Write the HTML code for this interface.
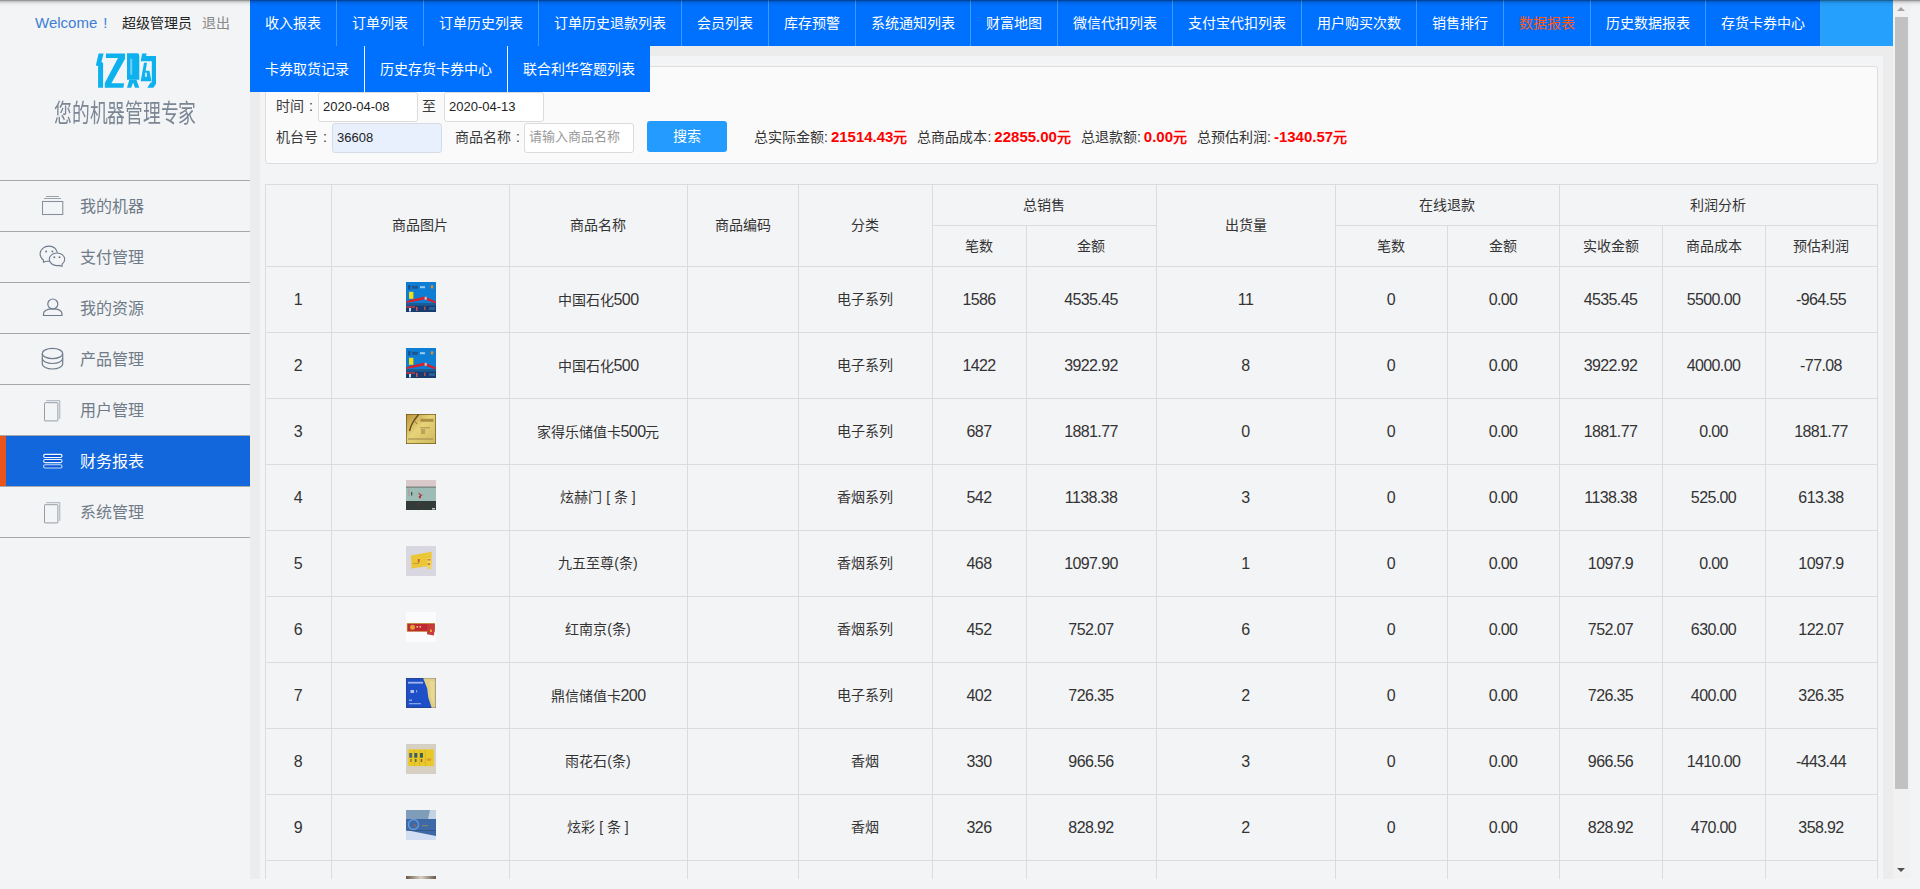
<!DOCTYPE html>
<html lang="zh-CN"><head><meta charset="utf-8"><title>report</title>
<style>
*{margin:0;padding:0;box-sizing:border-box}
html,body{width:1920px;height:889px;overflow:hidden}
body{font-family:"Liberation Sans",sans-serif;font-size:14px;color:#333;background:#f3f4f6;position:relative}
.abs{position:absolute}
.t{position:absolute;white-space:nowrap;line-height:1}
#side{left:0;top:0;width:250px;height:889px;background:#f3f4f6}
.mline{position:absolute;left:0;width:250px;height:1px;background:#a8a8a8}
.mtext{position:absolute;left:80px;font-size:16px;color:#6f7b88;line-height:1}
#frame{left:250px;top:0;width:1660px;height:879px;background:#ececec;overflow:hidden}
.nav{position:absolute;height:46px;background:#0070ff;color:#fff;font-size:14px;line-height:44px;padding-top:1px;padding-left:15px;white-space:nowrap}
.cell{position:absolute;text-align:center;white-space:nowrap;line-height:1;font-size:14px;color:#333}
.vl{position:absolute;width:1px;background:#dcdcdc}
.hl{position:absolute;height:1px;background:#dcdcdc}
.n{font-size:16px;letter-spacing:-0.6px}
.c{display:inline-block;width:14px;text-align:center}
</style></head><body>

<div id="side" class="abs">
<div class="t" style="left:35px;top:15px;font-size:15px;color:#3d7fd4">Welcome<span class="c" style="width:16px">!</span></div>
<div class="t" style="left:122px;top:16px;font-size:14px;color:#222">超级管理员</div>
<div class="t" style="left:202px;top:16px;font-size:14px;color:#888">退出</div>
<svg class="abs" style="left:92px;top:50px" width="68" height="42" viewBox="0 0 68 42">
<g fill="#0db1ee">
<path d="M6.6 3.5 L11.6 3.5 L9.5 11.8 L11.1 13.2 L11.1 37.8 L6.1 37.8 L6.1 16.1 L3.8 15.6 Z"/>
<path d="M13.9 3.5 L33.1 3.5 L33.1 8.7 L19.4 33.3 L32.1 33.3 L31.4 37.8 L12.8 37.8 L12.8 33.1 L26 8 L13.9 8 Z"/>
<path d="M35 3.3 L45.5 3.3 Q47.3 3.3 47.3 6 L47.3 29.8 L35 29.8 Z"/>
<path d="M37.3 29.8 L35 37.8 L39.2 37.8 L41.1 32.6 L43 37.8 L47.3 37.8 L44.4 29.8 Z"/>
<path d="M50.1 3.5 L54.8 3.5 L53.9 6.1 L64 6.1 L64 34 L61.4 37.8 L55.3 37.8 L58.6 32.6 L59.8 32.6 L59.8 11.3 L48.7 11.3 Z"/>
<path d="M52 12.8 L55 12.8 L53.6 20.8 L57.4 20.8 L59.5 31.2 L48.7 31.2 Z"/>
</g>
<rect x="38.2" y="8.7" width="2" height="16" fill="#74cdf2"/>
<rect x="52.9" y="22.7" width="2.1" height="4.2" fill="#bfe6f7"/>
</svg>
<div class="t" style="left:54px;top:101px;font-size:25px;color:#7a8693;transform:scaleX(0.71);transform-origin:0 0">您的机器管理专家</div>
<div class="mline" style="top:180px"></div>
<div class="mline" style="top:231px"></div>
<div class="mline" style="top:282px"></div>
<div class="mline" style="top:333px"></div>
<div class="mline" style="top:384px"></div>
<div class="mline" style="top:435px"></div>
<div class="mline" style="top:486px"></div>
<div class="mline" style="top:537px"></div>
<div class="abs" style="left:0;top:436px;width:250px;height:50px;background:#1267dc"></div>
<div class="abs" style="left:0;top:436px;width:6px;height:50px;background:#e8541a"></div>
<div class="mtext" style="top:199px;color:#6f7b88">我的机器</div>
<div class="mtext" style="top:250px;color:#6f7b88">支付管理</div>
<div class="mtext" style="top:301px;color:#6f7b88">我的资源</div>
<div class="mtext" style="top:352px;color:#6f7b88">产品管理</div>
<div class="mtext" style="top:403px;color:#6f7b88">用户管理</div>
<div class="mtext" style="top:454px;color:#fff">财务报表</div>
<div class="mtext" style="top:505px;color:#6f7b88">系统管理</div>
<svg class="abs" style="left:40px;top:194px" width="26" height="24"><g fill="none" stroke="#6e7c8c" stroke-width="1.05">
<rect x="2.5" y="7.5" width="20.3" height="13" stroke="#87909b"/><line x1="4" y1="4.5" x2="21" y2="4.5" stroke="#9aa3ad"/><line x1="6" y1="2.5" x2="19" y2="2.5" stroke="#9aa3ad"/></g></svg>
<svg class="abs" style="left:38px;top:244px" width="30" height="26"><g fill="none" stroke="#6e7c8c" stroke-width="1.1" stroke-linejoin="round">
<path d="M11.3 17.4 C8.5 17.1 7.2 17.3 5.4 18.3 L5.5 16.2 C3.3 14.5 2.1 12.3 2.1 9.8 C2.1 5.4 6.2 2.1 11 2.1 C15 2.1 18.3 4.6 19.4 8.6"/>
<path d="M21.9 21.4 C20.9 21.6 20 21.6 19 21.6 C14.7 21.6 11.3 18.8 11.3 15.3 C11.3 11.8 14.7 9 19 9 C23.3 9 26.7 11.8 26.7 15.3 C26.7 17.2 25.8 18.8 24.2 20 L24 22.5 Z"/>
</g><g fill="#6e7c8c"><circle cx="8.1" cy="7.5" r="1"/><circle cx="14.4" cy="7.5" r="1"/><circle cx="16.3" cy="13.2" r="1"/><circle cx="21.5" cy="13.2" r="1"/></g></svg>
<svg class="abs" style="left:40px;top:296px" width="26" height="24"><g fill="none" stroke="#6e7c8c" stroke-width="1.2">
<circle cx="12.8" cy="8" r="5"/><path d="M3.5 19.5 L3.5 18 C3.5 14.8 7 12.8 12.8 12.8 C18.5 12.8 22 14.8 22 18 L22 19.5 Z"/></g></svg>
<svg class="abs" style="left:40px;top:346px" width="26" height="26"><g fill="none" stroke="#6e7c8c" stroke-width="1.2">
<ellipse cx="12.5" cy="7.5" rx="10.2" ry="5.1"/><path d="M2.3 7.5 L2.3 17.8 C2.3 20.8 6.8 23 12.5 23 C18.2 23 22.7 20.8 22.7 17.8 L22.7 7.5"/><path d="M2.3 12.3 C2.3 15.3 6.8 17.5 12.5 17.5 C18.2 17.5 22.7 15.3 22.7 12.3"/></g></svg>
<svg class="abs" style="left:42px;top:398px" width="22" height="26"><g fill="none" stroke-width="0.9">
<path d="M4.3 2.7 L17.8 2.7 L17.8 20.8" stroke="#a2a9b2"/><rect x="2.5" y="4.7" width="13.4" height="18.2" rx="0.6" stroke="#8b939d"/></g></svg>
<svg class="abs" style="left:42px;top:500px" width="22" height="26"><g fill="none" stroke-width="0.9">
<path d="M4.3 2.7 L17.8 2.7 L17.8 20.8" stroke="#a2a9b2"/><rect x="2.5" y="4.7" width="13.4" height="18.2" rx="0.6" stroke="#8b939d"/></g></svg>
<svg class="abs" style="left:42px;top:452px" width="22" height="18"><g fill="#0a58da" stroke-width="1.1">
<rect x="1.6" y="2.4" width="18.4" height="3.1" rx="1.5" stroke="#fff"/><rect x="1.6" y="7.5" width="18.4" height="3.1" rx="1.5" stroke="#e8f0fc"/><rect x="1.6" y="12.8" width="18.4" height="3.2" rx="1.5" stroke="#c6d9f6"/></g></svg>
</div>
<div id="frame" class="abs">
<div class="abs" style="left:10px;top:56px;width:1623px;height:823px;background:#f3f4f6"></div>
<div class="abs" style="left:15px;top:66px;width:1613px;height:98px;background:#fafafa;border:1px solid #dedede;border-radius:3px"></div>
<div class="abs" style="left:0;top:0;width:1643px;height:46px;background:#25a0fd"></div>
<div class="nav" style="left:0px;top:0;width:87px;color:#fff">收入报表<i class="abs" style="right:0;top:0;width:1px;height:46px;background:#3d9bff"></i></div>
<div class="nav" style="left:87px;top:0;width:87px;color:#fff">订单列表<i class="abs" style="right:0;top:0;width:1px;height:46px;background:#3d9bff"></i></div>
<div class="nav" style="left:174px;top:0;width:115px;color:#fff">订单历史列表<i class="abs" style="right:0;top:0;width:1px;height:46px;background:#3d9bff"></i></div>
<div class="nav" style="left:289px;top:0;width:143px;color:#fff">订单历史退款列表<i class="abs" style="right:0;top:0;width:1px;height:46px;background:#3d9bff"></i></div>
<div class="nav" style="left:432px;top:0;width:87px;color:#fff">会员列表<i class="abs" style="right:0;top:0;width:1px;height:46px;background:#3d9bff"></i></div>
<div class="nav" style="left:519px;top:0;width:87px;color:#fff">库存预警<i class="abs" style="right:0;top:0;width:1px;height:46px;background:#3d9bff"></i></div>
<div class="nav" style="left:606px;top:0;width:115px;color:#fff">系统通知列表<i class="abs" style="right:0;top:0;width:1px;height:46px;background:#3d9bff"></i></div>
<div class="nav" style="left:721px;top:0;width:87px;color:#fff">财富地图<i class="abs" style="right:0;top:0;width:1px;height:46px;background:#3d9bff"></i></div>
<div class="nav" style="left:808px;top:0;width:115px;color:#fff">微信代扣列表<i class="abs" style="right:0;top:0;width:1px;height:46px;background:#3d9bff"></i></div>
<div class="nav" style="left:923px;top:0;width:129px;color:#fff">支付宝代扣列表<i class="abs" style="right:0;top:0;width:1px;height:46px;background:#3d9bff"></i></div>
<div class="nav" style="left:1052px;top:0;width:115px;color:#fff">用户购买次数<i class="abs" style="right:0;top:0;width:1px;height:46px;background:#3d9bff"></i></div>
<div class="nav" style="left:1167px;top:0;width:87px;color:#fff">销售排行<i class="abs" style="right:0;top:0;width:1px;height:46px;background:#3d9bff"></i></div>
<div class="nav" style="left:1254px;top:0;width:87px;color:#ff5a14">数据报表<i class="abs" style="right:0;top:0;width:1px;height:46px;background:#3d9bff"></i></div>
<div class="nav" style="left:1341px;top:0;width:115px;color:#fff">历史数据报表<i class="abs" style="right:0;top:0;width:1px;height:46px;background:#3d9bff"></i></div>
<div class="nav" style="left:1456px;top:0;width:115px;color:#fff">存货卡券中心<i class="abs" style="right:0;top:0;width:1px;height:46px;background:#3d9bff"></i></div>
<div class="nav" style="left:0px;top:46px;width:115px">卡券取货记录<i class="abs" style="right:0;top:0;width:1px;height:46px;background:#f0f6ff"></i></div>
<div class="nav" style="left:115px;top:46px;width:143px">历史存货卡券中心<i class="abs" style="right:0;top:0;width:1px;height:46px;background:#f0f6ff"></i></div>
<div class="nav" style="left:258px;top:46px;width:142px">联合利华答题列表</div>
<div class="t" style="left:26px;top:99px;font-size:14px;color:#3a3a3a">时间<span class="c">:</span></div>
<div class="abs" style="left:68px;top:92px;width:100px;height:30px;background:#fff;border:1px solid #dcdcdc;border-radius:3px"></div>
<div class="t" style="left:73px;top:100px;font-size:13px;color:#222">2020-04-08</div>
<div class="t" style="left:172px;top:99px;font-size:14px;color:#3a3a3a">至</div>
<div class="abs" style="left:194px;top:92px;width:100px;height:30px;background:#fff;border:1px solid #dcdcdc;border-radius:3px"></div>
<div class="t" style="left:199px;top:100px;font-size:13px;color:#222">2020-04-13</div>
<div class="t" style="left:26px;top:130px;font-size:14px;color:#3a3a3a">机台号<span class="c">:</span></div>
<div class="abs" style="left:82px;top:123px;width:110px;height:30px;background:#e8f0fe;border:1px solid #d5dce6;border-radius:3px"></div>
<div class="t" style="left:87px;top:131px;font-size:13px;color:#222">36608</div>
<div class="t" style="left:205px;top:130px;font-size:14px;color:#3a3a3a">商品名称<span class="c">:</span></div>
<div class="abs" style="left:274px;top:123px;width:110px;height:30px;background:#fff;border:1px solid #dcdcdc;border-radius:3px"></div>
<div class="t" style="left:279px;top:130px;font-size:13px;color:#999">请输入商品名称</div>
<div class="abs" style="left:397px;top:121px;width:80px;height:31px;background:#249cff;border-radius:3px;color:#fff;font-size:14px;line-height:31px;text-align:center">搜索</div>
<div class="t" style="left:504px;top:129px;font-size:14px;color:#333">总实际金额:<b style="color:#f00;font-size:15px;margin-left:3px">21514.43<span style="font-size:14px">元</span></b><span style="margin-left:10px">总商品成本:</span><b style="color:#f00;font-size:15px;margin-left:3px">22855.00<span style="font-size:14px">元</span></b><span style="margin-left:10px">总退款额:</span><b style="color:#f00;font-size:15px;margin-left:3px">0.00<span style="font-size:14px">元</span></b><span style="margin-left:10px">总预估利润:</span><b style="color:#f00;font-size:15px;margin-left:3px">-1340.57<span style="font-size:14px">元</span></b></div>
<div class="hl" style="left:15px;top:184px;width:1613px"></div>
<div class="vl" style="left:15px;top:184px;height:695px"></div>
<div class="vl" style="left:81px;top:184px;height:695px"></div>
<div class="vl" style="left:259px;top:184px;height:695px"></div>
<div class="vl" style="left:437px;top:184px;height:695px"></div>
<div class="vl" style="left:548px;top:184px;height:695px"></div>
<div class="vl" style="left:682px;top:184px;height:695px"></div>
<div class="vl" style="left:776px;top:225px;height:654px"></div>
<div class="vl" style="left:906px;top:184px;height:695px"></div>
<div class="vl" style="left:1085px;top:184px;height:695px"></div>
<div class="vl" style="left:1197px;top:225px;height:654px"></div>
<div class="vl" style="left:1309px;top:184px;height:695px"></div>
<div class="vl" style="left:1412px;top:225px;height:654px"></div>
<div class="vl" style="left:1515px;top:225px;height:654px"></div>
<div class="vl" style="left:1627px;top:184px;height:695px"></div>
<div class="hl" style="left:682px;top:225px;width:224px"></div>
<div class="hl" style="left:1085px;top:225px;width:542px"></div>
<div class="hl" style="left:15px;top:266px;width:1613px"></div>
<div class="hl" style="left:15px;top:332px;width:1613px"></div>
<div class="hl" style="left:15px;top:398px;width:1613px"></div>
<div class="hl" style="left:15px;top:464px;width:1613px"></div>
<div class="hl" style="left:15px;top:530px;width:1613px"></div>
<div class="hl" style="left:15px;top:596px;width:1613px"></div>
<div class="hl" style="left:15px;top:662px;width:1613px"></div>
<div class="hl" style="left:15px;top:728px;width:1613px"></div>
<div class="hl" style="left:15px;top:794px;width:1613px"></div>
<div class="hl" style="left:15px;top:860px;width:1613px"></div>
<div class="cell" style="left:81px;width:178px;top:218px;">商品图片</div>
<div class="cell" style="left:259px;width:178px;top:218px;">商品名称</div>
<div class="cell" style="left:437px;width:111px;top:218px;">商品编码</div>
<div class="cell" style="left:548px;width:134px;top:218px;">分类</div>
<div class="cell" style="left:906px;width:179px;top:218px;">出货量</div>
<div class="cell" style="left:682px;width:224px;top:198px;">总销售</div>
<div class="cell" style="left:1085px;width:224px;top:198px;">在线退款</div>
<div class="cell" style="left:1309px;width:318px;top:198px;">利润分析</div>
<div class="cell" style="left:682px;width:94px;top:239px;">笔数</div>
<div class="cell" style="left:776px;width:130px;top:239px;">金额</div>
<div class="cell" style="left:1085px;width:112px;top:239px;">笔数</div>
<div class="cell" style="left:1197px;width:112px;top:239px;">金额</div>
<div class="cell" style="left:1309px;width:103px;top:239px;">实收金额</div>
<div class="cell" style="left:1412px;width:103px;top:239px;">商品成本</div>
<div class="cell" style="left:1515px;width:112px;top:239px;">预估利润</div>
<svg width="0" height="0" style="position:absolute"><defs><filter id="tbl" x="-10%" y="-10%" width="120%" height="120%"><feGaussianBlur stdDeviation="0.4"/></filter><clipPath id="tcl"><rect width="30" height="30"/></clipPath></defs></svg>
<div class="cell" style="left:15px;width:66px;top:292px;"><span class="n">1</span></div>
<svg class="abs" style="left:156px;top:282px" width="30" height="30" viewBox="0 0 30 30"><g clip-path="url(#tcl)"><rect width="30" height="30" fill="#0c7ed4"/><g filter="url(#tbl)"><rect width="30" height="30" fill="#0c7ed4"/><rect x="2" y="3" width="2.5" height="4.5" fill="#23508c"/><rect x="6" y="3.8" width="6" height="3" fill="#1f5590"/><rect x="14" y="4.2" width="5" height="2" fill="#9ccaf0"/><ellipse cx="26" cy="4.8" rx="1.3" ry="1.9" fill="#e08a2c"/><rect x="3" y="9.8" width="4.4" height="7" fill="#f2e019"/><path d="M0.5 19 L18.5 14.6 L30 19.6 L30 21.6 L18.5 17.4 L0.5 21 Z" fill="#d8202c"/><rect x="18.6" y="14.8" width="2.2" height="3" fill="#b8c8d8"/><rect x="0" y="21" width="30" height="2.6" fill="#1c5c92"/><rect x="0" y="23.5" width="30" height="6.5" fill="#173e6e"/><rect x="0" y="24.2" width="9" height="1.6" fill="#c03848"/><rect x="3" y="26" width="2" height="3.5" fill="#c8dcec"/><rect x="10" y="25" width="1.5" height="4" fill="#d05060"/><rect x="18" y="24.5" width="1.5" height="3.5" fill="#c04858"/><rect x="23" y="25" width="6" height="3" fill="#2a5e98"/></g></g></svg>
<div class="cell" style="left:259px;width:178px;top:292px;">中国石化<span class="n">500</span></div>
<div class="cell" style="left:548px;width:134px;top:292px;">电子系列</div>
<div class="cell" style="left:682px;width:94px;top:292px;"><span class="n">1586</span></div>
<div class="cell" style="left:776px;width:130px;top:292px;"><span class="n">4535.45</span></div>
<div class="cell" style="left:906px;width:179px;top:292px;"><span class="n">11</span></div>
<div class="cell" style="left:1085px;width:112px;top:292px;"><span class="n">0</span></div>
<div class="cell" style="left:1197px;width:112px;top:292px;"><span class="n">0.00</span></div>
<div class="cell" style="left:1309px;width:103px;top:292px;"><span class="n">4535.45</span></div>
<div class="cell" style="left:1412px;width:103px;top:292px;"><span class="n">5500.00</span></div>
<div class="cell" style="left:1515px;width:112px;top:292px;"><span class="n">-964.55</span></div>
<div class="cell" style="left:15px;width:66px;top:358px;"><span class="n">2</span></div>
<svg class="abs" style="left:156px;top:348px" width="30" height="30" viewBox="0 0 30 30"><g clip-path="url(#tcl)"><rect width="30" height="30" fill="#0c7ed4"/><g filter="url(#tbl)"><rect width="30" height="30" fill="#0c7ed4"/><rect x="2" y="3" width="2.5" height="4.5" fill="#23508c"/><rect x="6" y="3.8" width="6" height="3" fill="#1f5590"/><rect x="14" y="4.2" width="5" height="2" fill="#9ccaf0"/><ellipse cx="26" cy="4.8" rx="1.3" ry="1.9" fill="#e08a2c"/><rect x="3" y="9.8" width="4.4" height="7" fill="#f2e019"/><path d="M0.5 19 L18.5 14.6 L30 19.6 L30 21.6 L18.5 17.4 L0.5 21 Z" fill="#d8202c"/><rect x="18.6" y="14.8" width="2.2" height="3" fill="#b8c8d8"/><rect x="0" y="21" width="30" height="2.6" fill="#1c5c92"/><rect x="0" y="23.5" width="30" height="6.5" fill="#173e6e"/><rect x="0" y="24.2" width="9" height="1.6" fill="#c03848"/><rect x="3" y="26" width="2" height="3.5" fill="#c8dcec"/><rect x="10" y="25" width="1.5" height="4" fill="#d05060"/><rect x="18" y="24.5" width="1.5" height="3.5" fill="#c04858"/><rect x="23" y="25" width="6" height="3" fill="#2a5e98"/></g></g></svg>
<div class="cell" style="left:259px;width:178px;top:358px;">中国石化<span class="n">500</span></div>
<div class="cell" style="left:548px;width:134px;top:358px;">电子系列</div>
<div class="cell" style="left:682px;width:94px;top:358px;"><span class="n">1422</span></div>
<div class="cell" style="left:776px;width:130px;top:358px;"><span class="n">3922.92</span></div>
<div class="cell" style="left:906px;width:179px;top:358px;"><span class="n">8</span></div>
<div class="cell" style="left:1085px;width:112px;top:358px;"><span class="n">0</span></div>
<div class="cell" style="left:1197px;width:112px;top:358px;"><span class="n">0.00</span></div>
<div class="cell" style="left:1309px;width:103px;top:358px;"><span class="n">3922.92</span></div>
<div class="cell" style="left:1412px;width:103px;top:358px;"><span class="n">4000.00</span></div>
<div class="cell" style="left:1515px;width:112px;top:358px;"><span class="n">-77.08</span></div>
<div class="cell" style="left:15px;width:66px;top:424px;"><span class="n">3</span></div>
<svg class="abs" style="left:156px;top:414px" width="30" height="30" viewBox="0 0 30 30"><g clip-path="url(#tcl)"><rect width="30" height="30" fill="#d8c068"/><g filter="url(#tbl)"><defs><linearGradient id="g3" x1="0" y1="0" x2="1" y2="1"><stop offset="0" stop-color="#b89038"/><stop offset=".45" stop-color="#e6d47a"/><stop offset="1" stop-color="#cdb85a"/></linearGradient></defs><rect width="30" height="30" fill="url(#g3)"/><rect x="0.3" y="0.3" width="29.4" height="29.4" fill="none" stroke="#6a5018" stroke-width="0.7"/><path d="M12.5 0.5 L8 6.5 L5 12 L3.5 17" stroke="#6a4a20" stroke-width="1.4" fill="none"/><path d="M8 6 L11 10" stroke="#8a6a30" stroke-width="0.8"/><rect x="14.5" y="4.8" width="13" height="3" fill="#a08038" opacity=".8"/><rect x="14" y="13" width="10" height="1.5" fill="#b09050" opacity=".7"/><rect x="15" y="15" width="4" height="5" fill="#b09050" opacity=".7"/><rect x="2" y="24" width="25" height="2" fill="#a89050" opacity=".6"/></g></g></svg>
<div class="cell" style="left:259px;width:178px;top:424px;">家得乐储值卡<span class="n">500</span>元</div>
<div class="cell" style="left:548px;width:134px;top:424px;">电子系列</div>
<div class="cell" style="left:682px;width:94px;top:424px;"><span class="n">687</span></div>
<div class="cell" style="left:776px;width:130px;top:424px;"><span class="n">1881.77</span></div>
<div class="cell" style="left:906px;width:179px;top:424px;"><span class="n">0</span></div>
<div class="cell" style="left:1085px;width:112px;top:424px;"><span class="n">0</span></div>
<div class="cell" style="left:1197px;width:112px;top:424px;"><span class="n">0.00</span></div>
<div class="cell" style="left:1309px;width:103px;top:424px;"><span class="n">1881.77</span></div>
<div class="cell" style="left:1412px;width:103px;top:424px;"><span class="n">0.00</span></div>
<div class="cell" style="left:1515px;width:112px;top:424px;"><span class="n">1881.77</span></div>
<div class="cell" style="left:15px;width:66px;top:490px;"><span class="n">4</span></div>
<svg class="abs" style="left:156px;top:480px" width="30" height="30" viewBox="0 0 30 30"><g clip-path="url(#tcl)"><rect width="30" height="30" fill="#9dbcb6"/><g filter="url(#tbl)"><rect width="30" height="30" fill="#3a4442"/><rect width="30" height="7" fill="#d9c9cb"/><rect y="6.6" width="30" height="1" fill="#6c7674"/><rect y="7.5" width="30" height="13.5" fill="#9dbcb6"/><rect x="2.5" y="9" width="0.8" height="7" fill="#c08888"/><rect x="5" y="12" width="1.3" height="3.5" fill="#4a5050"/><path d="M12 12.5 L14 13.5 L15.5 15 L17.5 14.5 L15 16 L15 18 L13.5 18.5 L12.5 16.5 L14 15.5 Z" fill="#b03040"/><rect y="21" width="30" height="9" fill="#323a38"/><rect x="11.5" y="23" width="2" height="3" fill="#603838" opacity=".7"/><rect x="26" y="28" width="3" height="1.5" fill="#c8c8c8"/></g></g></svg>
<div class="cell" style="left:259px;width:178px;top:490px;">炫赫门 [ 条 ]</div>
<div class="cell" style="left:548px;width:134px;top:490px;">香烟系列</div>
<div class="cell" style="left:682px;width:94px;top:490px;"><span class="n">542</span></div>
<div class="cell" style="left:776px;width:130px;top:490px;"><span class="n">1138.38</span></div>
<div class="cell" style="left:906px;width:179px;top:490px;"><span class="n">3</span></div>
<div class="cell" style="left:1085px;width:112px;top:490px;"><span class="n">0</span></div>
<div class="cell" style="left:1197px;width:112px;top:490px;"><span class="n">0.00</span></div>
<div class="cell" style="left:1309px;width:103px;top:490px;"><span class="n">1138.38</span></div>
<div class="cell" style="left:1412px;width:103px;top:490px;"><span class="n">525.00</span></div>
<div class="cell" style="left:1515px;width:112px;top:490px;"><span class="n">613.38</span></div>
<div class="cell" style="left:15px;width:66px;top:556px;"><span class="n">5</span></div>
<svg class="abs" style="left:156px;top:546px" width="30" height="30" viewBox="0 0 30 30"><g clip-path="url(#tcl)"><rect width="30" height="30" fill="#d8d6df"/><g filter="url(#tbl)"><rect width="30" height="30" fill="#d8d6df"/><path d="M4.8 9.6 L25.6 5.8 L25.6 19.4 L5.6 22.6 Z" fill="#ebc734"/><rect x="21" y="12" width="4.3" height="11" fill="#f0d45a"/><rect x="11.8" y="13" width="1.8" height="3.4" fill="#c05a40"/><rect x="7" y="17" width="6" height="1" fill="#c8903a" opacity=".8"/><rect x="21.5" y="13" width="3" height="1.5" fill="#d08050"/><rect x="21.8" y="17" width="2" height="2" fill="#c87040"/></g></g></svg>
<div class="cell" style="left:259px;width:178px;top:556px;">九五至尊(条)</div>
<div class="cell" style="left:548px;width:134px;top:556px;">香烟系列</div>
<div class="cell" style="left:682px;width:94px;top:556px;"><span class="n">468</span></div>
<div class="cell" style="left:776px;width:130px;top:556px;"><span class="n">1097.90</span></div>
<div class="cell" style="left:906px;width:179px;top:556px;"><span class="n">1</span></div>
<div class="cell" style="left:1085px;width:112px;top:556px;"><span class="n">0</span></div>
<div class="cell" style="left:1197px;width:112px;top:556px;"><span class="n">0.00</span></div>
<div class="cell" style="left:1309px;width:103px;top:556px;"><span class="n">1097.9</span></div>
<div class="cell" style="left:1412px;width:103px;top:556px;"><span class="n">0.00</span></div>
<div class="cell" style="left:1515px;width:112px;top:556px;"><span class="n">1097.9</span></div>
<div class="cell" style="left:15px;width:66px;top:622px;"><span class="n">6</span></div>
<svg class="abs" style="left:156px;top:612px" width="30" height="30" viewBox="0 0 30 30"><g clip-path="url(#tcl)"><rect width="30" height="30" fill="#fbfbfb"/><g filter="url(#tbl)"><rect width="30" height="30" fill="#fbfbfb"/><rect x="0.8" y="11" width="28.2" height="8.8" fill="#c8a048"/><rect x="1.5" y="11.8" width="27" height="7.4" fill="#bf2a32"/><circle cx="6.5" cy="15.3" r="2.5" fill="#e0a030"/><rect x="10.5" y="14" width="1.5" height="1.6" fill="#f0c8a0"/><rect x="13.5" y="14" width="1.5" height="1.6" fill="#f0c8a0"/><path d="M21.5 12 L28.8 12.3 L28 23.5 L21 22.3 Z" fill="#c83a3a"/><rect x="24" y="17.5" width="2" height="2.5" fill="#e8a030"/></g></g></svg>
<div class="cell" style="left:259px;width:178px;top:622px;">红南京(条)</div>
<div class="cell" style="left:548px;width:134px;top:622px;">香烟系列</div>
<div class="cell" style="left:682px;width:94px;top:622px;"><span class="n">452</span></div>
<div class="cell" style="left:776px;width:130px;top:622px;"><span class="n">752.07</span></div>
<div class="cell" style="left:906px;width:179px;top:622px;"><span class="n">6</span></div>
<div class="cell" style="left:1085px;width:112px;top:622px;"><span class="n">0</span></div>
<div class="cell" style="left:1197px;width:112px;top:622px;"><span class="n">0.00</span></div>
<div class="cell" style="left:1309px;width:103px;top:622px;"><span class="n">752.07</span></div>
<div class="cell" style="left:1412px;width:103px;top:622px;"><span class="n">630.00</span></div>
<div class="cell" style="left:1515px;width:112px;top:622px;"><span class="n">122.07</span></div>
<div class="cell" style="left:15px;width:66px;top:688px;"><span class="n">7</span></div>
<svg class="abs" style="left:156px;top:678px" width="30" height="30" viewBox="0 0 30 30"><g clip-path="url(#tcl)"><rect width="30" height="30" fill="#1f4fc8"/><g filter="url(#tbl)"><rect width="30" height="30" fill="#1f4fc8"/><rect width="30" height="30" fill="none" stroke="#402818" stroke-width="0.6"/><path d="M17.2 0.3 L29.7 0.3 L29.7 29.7 L25.6 29.7 L22.3 19.5 L21.2 10.5 Z" fill="#e2cf86"/><path d="M24 3 L28 3 L28 26 L25 20 Z" fill="#f0e0a0" opacity=".6"/><rect x="2" y="3.8" width="15" height="1.8" fill="#b8c8f0" opacity=".85"/><rect x="4.5" y="12" width="3.5" height="3" fill="#d8e0f0" opacity=".8"/><rect x="10" y="12" width="1.2" height="2.5" fill="#c8d4f0" opacity=".6"/><rect x="3" y="21.5" width="3" height="1.5" fill="#c0d0f0" opacity=".7"/><rect x="3" y="25" width="12" height="1.3" fill="#b0c4ee" opacity=".7"/></g></g></svg>
<div class="cell" style="left:259px;width:178px;top:688px;">鼎信储值卡<span class="n">200</span></div>
<div class="cell" style="left:548px;width:134px;top:688px;">电子系列</div>
<div class="cell" style="left:682px;width:94px;top:688px;"><span class="n">402</span></div>
<div class="cell" style="left:776px;width:130px;top:688px;"><span class="n">726.35</span></div>
<div class="cell" style="left:906px;width:179px;top:688px;"><span class="n">2</span></div>
<div class="cell" style="left:1085px;width:112px;top:688px;"><span class="n">0</span></div>
<div class="cell" style="left:1197px;width:112px;top:688px;"><span class="n">0.00</span></div>
<div class="cell" style="left:1309px;width:103px;top:688px;"><span class="n">726.35</span></div>
<div class="cell" style="left:1412px;width:103px;top:688px;"><span class="n">400.00</span></div>
<div class="cell" style="left:1515px;width:112px;top:688px;"><span class="n">326.35</span></div>
<div class="cell" style="left:15px;width:66px;top:754px;"><span class="n">8</span></div>
<svg class="abs" style="left:156px;top:744px" width="30" height="30" viewBox="0 0 30 30"><g clip-path="url(#tcl)"><rect width="30" height="30" fill="#d6cfc3"/><g filter="url(#tbl)"><rect width="30" height="30" fill="#d6cfc3"/><rect x="2.2" y="5.3" width="25.6" height="16.8" fill="#e9c92a"/><rect x="8" y="6" width="0.6" height="16" fill="#c8a820"/><rect x="13.5" y="6" width="0.6" height="16" fill="#c8a820"/><rect x="18.8" y="6" width="1" height="16" fill="#d8b820"/><rect x="3.2" y="9" width="3" height="4.7" fill="#4a6a7a"/><rect x="8.3" y="9" width="3" height="4.7" fill="#3a5a60"/><rect x="14" y="9" width="3" height="4.7" fill="#3a6050"/><rect x="4" y="15" width="2" height="3" fill="#b88830"/><rect x="9" y="15" width="1.6" height="3" fill="#4a7a40"/><rect x="14.8" y="15" width="1.4" height="3" fill="#a04a30"/><ellipse cx="23" cy="15.5" rx="2.5" ry="1.6" fill="#d8a030"/></g></g></svg>
<div class="cell" style="left:259px;width:178px;top:754px;">雨花石(条)</div>
<div class="cell" style="left:548px;width:134px;top:754px;">香烟</div>
<div class="cell" style="left:682px;width:94px;top:754px;"><span class="n">330</span></div>
<div class="cell" style="left:776px;width:130px;top:754px;"><span class="n">966.56</span></div>
<div class="cell" style="left:906px;width:179px;top:754px;"><span class="n">3</span></div>
<div class="cell" style="left:1085px;width:112px;top:754px;"><span class="n">0</span></div>
<div class="cell" style="left:1197px;width:112px;top:754px;"><span class="n">0.00</span></div>
<div class="cell" style="left:1309px;width:103px;top:754px;"><span class="n">966.56</span></div>
<div class="cell" style="left:1412px;width:103px;top:754px;"><span class="n">1410.00</span></div>
<div class="cell" style="left:1515px;width:112px;top:754px;"><span class="n">-443.44</span></div>
<div class="cell" style="left:15px;width:66px;top:820px;"><span class="n">9</span></div>
<svg class="abs" style="left:156px;top:810px" width="30" height="30" viewBox="0 0 30 30"><g clip-path="url(#tcl)"><rect width="30" height="30" fill="#5a80b0"/><g filter="url(#tbl)"><rect width="30" height="30" fill="#d2def2"/><rect width="30" height="9" fill="#7f9cb8"/><path d="M24 0 L30 0 L30 9 L22 9 Z" fill="#c4d2e4"/><path d="M0 9 L30 9 L30 26 L0 20 Z" fill="#3e6aa6"/><circle cx="7.5" cy="14.5" r="5" fill="none" stroke="#6a9ad8" stroke-width="1.3"/><path d="M8 14 L10 17" stroke="#d06040" stroke-width="1"/><rect x="16" y="15" width="6" height="1.3" fill="#a08a50" opacity=".7"/><rect x="0" y="20" width="30" height="1" fill="#2c4c78" opacity=".6"/></g></g></svg>
<div class="cell" style="left:259px;width:178px;top:820px;">炫彩 [ 条 ]</div>
<div class="cell" style="left:548px;width:134px;top:820px;">香烟</div>
<div class="cell" style="left:682px;width:94px;top:820px;"><span class="n">326</span></div>
<div class="cell" style="left:776px;width:130px;top:820px;"><span class="n">828.92</span></div>
<div class="cell" style="left:906px;width:179px;top:820px;"><span class="n">2</span></div>
<div class="cell" style="left:1085px;width:112px;top:820px;"><span class="n">0</span></div>
<div class="cell" style="left:1197px;width:112px;top:820px;"><span class="n">0.00</span></div>
<div class="cell" style="left:1309px;width:103px;top:820px;"><span class="n">828.92</span></div>
<div class="cell" style="left:1412px;width:103px;top:820px;"><span class="n">470.00</span></div>
<div class="cell" style="left:1515px;width:112px;top:820px;"><span class="n">358.92</span></div>
<div class="abs" style="left:156px;top:876px;width:30px;height:3px;background:linear-gradient(90deg,#6a5a4a,#d8d0c4,#6a5a4a)"></div>
<div class="abs" style="left:1643px;top:0;width:17px;height:879px;background:#f1f1f1"></div>
<div class="abs" style="left:1645px;top:17px;width:13px;height:772px;background:#c1c1c1"></div>
<div class="abs" style="left:1647px;top:7px;width:0;height:0;border-left:4.5px solid transparent;border-right:4.5px solid transparent;border-bottom:4px solid #a3a3a3"></div>
<div class="abs" style="left:1647px;top:868px;width:0;height:0;border-left:4.5px solid transparent;border-right:4.5px solid transparent;border-top:4px solid #505050"></div>
</div>
<div class="abs" style="left:0;top:0;width:1920px;height:8px;background:linear-gradient(180deg,rgba(0,0,0,.38) 0.5px,rgba(0,0,0,.19) 1.5px,rgba(0,0,0,.12) 2.5px,rgba(0,0,0,.06) 3.5px,rgba(0,0,0,.03) 4.5px,rgba(0,0,0,.015) 5.5px,rgba(0,0,0,0) 7px)"></div>
</body></html>
